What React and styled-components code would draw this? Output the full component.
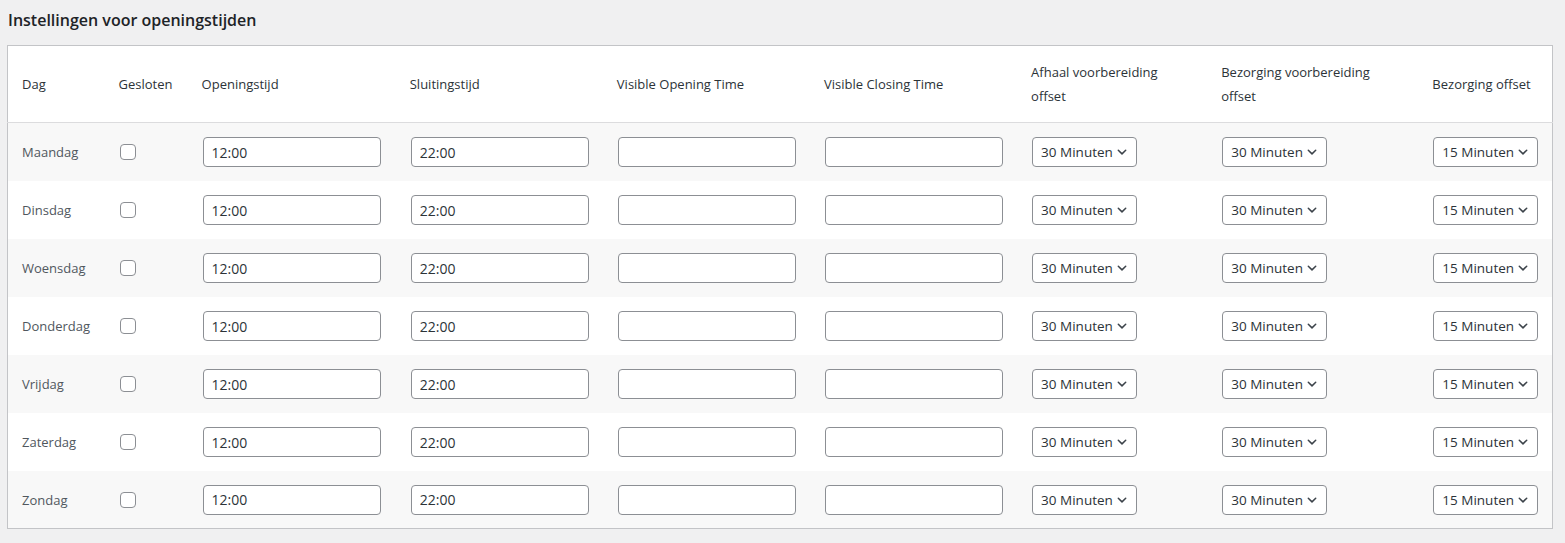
import React from 'react'
import styled, { createGlobalStyle } from 'styled-components'

const GlobalStyle = createGlobalStyle`
    body {
        margin: 0;
        background: #f0f0f1;
        font-family: "Open Sans", "Noto Sans", sans-serif;
        color: #3c434a;
    }
`

const days = ['Maandag', 'Dinsdag', 'Woensdag', 'Donderdag', 'Vrijdag', 'Zaterdag', 'Zondag']

// column widths measured from the screenshot
const columns = [
    { label: 'Dag', width: 101 },
    { label: 'Gesloten', width: 83 },
    { label: 'Openingstijd', width: 208 },
    { label: 'Sluitingstijd', width: 207 },
    { label: 'Visible Opening Time', width: 207 },
    { label: 'Visible Closing Time', width: 207 },
    { label: ['Afhaal voorbereiding', 'offset'], width: 190 },
    { label: ['Bezorging voorbereiding', 'offset'], width: 211 },
    { label: 'Bezorging offset', width: 130 },
]

function Chevron() {
    return (
        <svg width="12" height="12" viewBox="0 0 12 12" fill="none">
            <path d="M2.3 4.2 L6 7.9 L9.7 4.2" stroke="#3c434a" strokeWidth="1.5" strokeLinecap="round" strokeLinejoin="round" />
        </svg>
    )
}

function MinuteSelect({ value }) {
    return (
        <SelectWrap>
            <Select defaultValue={value}>
                <option value={value}>{value}</option>
            </Select>
            <ChevronHolder><Chevron /></ChevronHolder>
        </SelectWrap>
    )
}

function App() {
    return (
        <Page>
            <GlobalStyle />
            <Title>Instellingen voor openingstijden</Title>
            <Table>
                <colgroup>
                    {columns.map((c, i) => <col key={i} style={{ width: c.width }} />)}
                </colgroup>
                <thead>
                    <tr>
                        {columns.map((c, i) => (
                            <HeadCell key={i} first={i === 0}>
                                {Array.isArray(c.label)
                                    ? <>{c.label[0]}<br />{c.label[1]}</>
                                    : c.label}
                            </HeadCell>
                        ))}
                    </tr>
                </thead>
                <tbody>
                    {days.map((day, i) => (
                        <Row key={day} striped={i % 2 === 0}>
                            <Cell first>{day}</Cell>
                            <Cell><Checkbox type="checkbox" /></Cell>
                            <Cell><TextInput type="text" defaultValue="12:00" /></Cell>
                            <Cell><TextInput type="text" defaultValue="22:00" /></Cell>
                            <Cell><TextInput type="text" /></Cell>
                            <Cell><TextInput type="text" /></Cell>
                            <Cell><MinuteSelect value="30 Minuten" /></Cell>
                            <Cell><MinuteSelect value="30 Minuten" /></Cell>
                            <Cell><MinuteSelect value="15 Minuten" /></Cell>
                        </Row>
                    ))}
                </tbody>
            </Table>
        </Page>
    )
}

export default App

const Page = styled.div`
    padding: 0 12px 13px 7px;
`

const Title = styled.h2`
    margin: 0;
    padding: 9px 0 14px 1px;
    font-size: 16px;
    line-height: 22px;
    font-weight: 600;
    color: #1d2327;
`

const Table = styled.table`
    width: 1546px;
    table-layout: fixed;
    border-collapse: collapse;
    border: 1px solid #c3c4c7;
    background: #fff;
`

const HeadCell = styled.th`
    height: 76px;
    padding: 0 10px 0 ${p => p.first ? '14px' : '10px'};
    text-align: left;
    font-weight: 400;
    font-size: 13px;
    line-height: 24px;
    color: #2c3338;
    border-bottom: 1px solid #dcdcde;
    vertical-align: middle;
`

const Row = styled.tr`
    height: 58px;
    background: ${p => p.striped ? '#f8f8f8' : '#fff'};
`

const Cell = styled.td`
    padding: 1px 10px 0 ${p => p.first ? '14px' : '10px'};
    font-size: 13px;
    color: #50575e;
    vertical-align: middle;
`

const Checkbox = styled.input`
    appearance: none;
    display: block;
    margin: 0 0 0 1px;
    width: 16px;
    height: 16px;
    border: 1px solid #8c8f94;
    border-radius: 4px;
    background: #fff;
    box-sizing: border-box;
`

const TextInput = styled.input`
    display: block;
    box-sizing: border-box;
    width: 178px;
    height: 30px;
    margin: 0 0 0 1px;
    padding: 0 8px;
    border: 1px solid #8c8f94;
    border-radius: 4px;
    background: #fff;
    font-family: inherit;
    font-size: 14px;
    color: #2c3338;

    :focus {
        outline: none;
    }
`

const SelectWrap = styled.div`
    position: relative;
    width: 105px;
    margin-left: 1px;
`

const Select = styled.select`
    appearance: none;
    display: block;
    box-sizing: border-box;
    width: 100%;
    height: 30px;
    padding: 0 22px 0 8px;
    border: 1px solid #8c8f94;
    border-radius: 4px;
    background: #fff;
    font-family: inherit;
    font-size: 13.5px;
    color: #2c3338;
`

const ChevronHolder = styled.span`
    position: absolute;
    right: 9px;
    top: 9px;
    display: flex;
    pointer-events: none;
`
